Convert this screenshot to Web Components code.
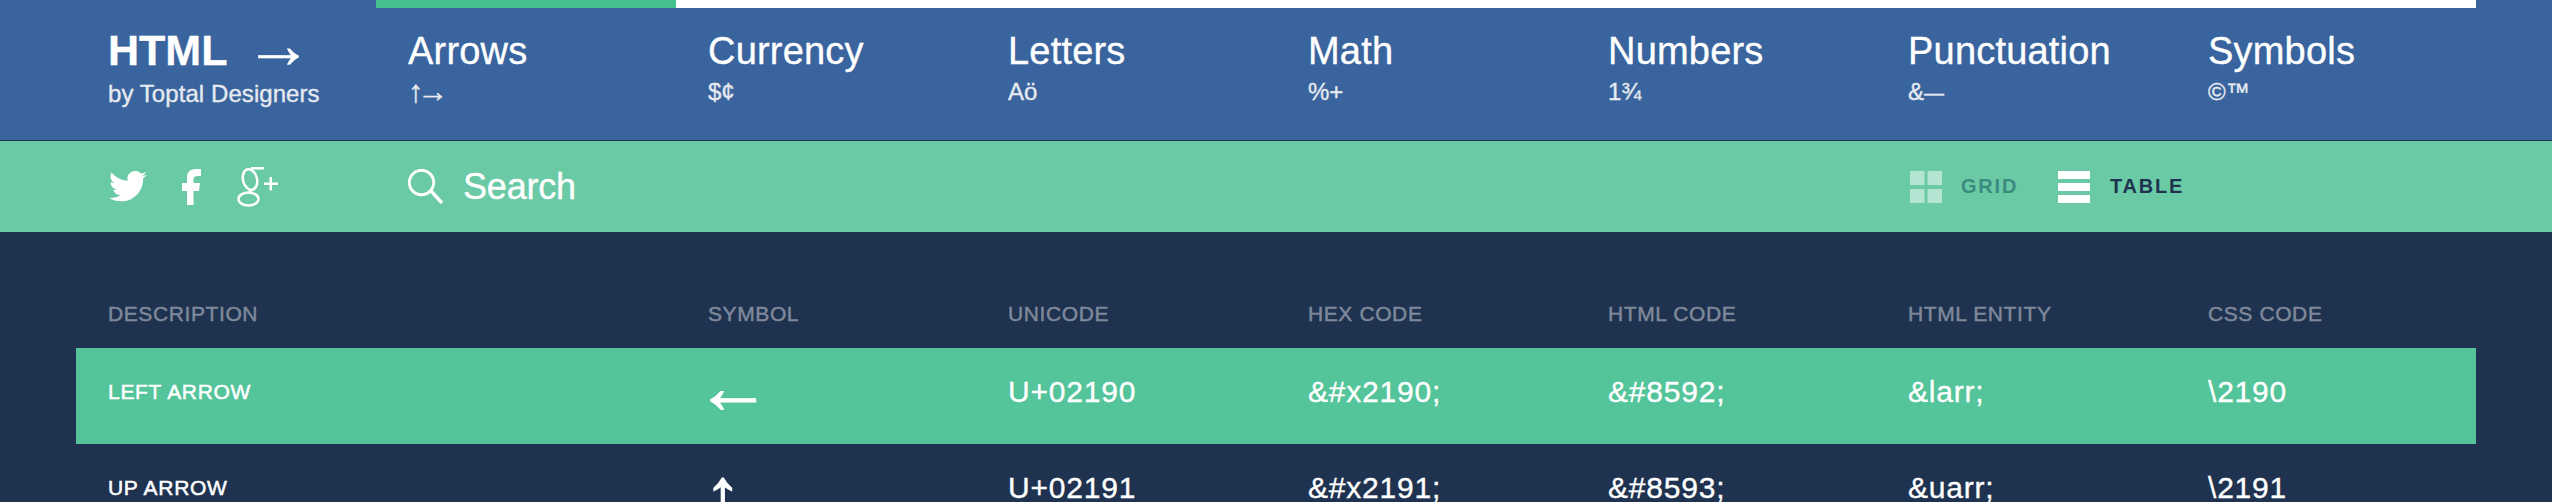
<!DOCTYPE html>
<html><head><meta charset="utf-8">
<style>
html,body{margin:0;padding:0;height:502px;overflow:hidden;background:#1f3350;font-family:"Liberation Sans",Arial,sans-serif;color:#fff}
</style></head>
<body>
<x-header>
  <x-brand slot="brand"></x-brand>
  <x-nav-item>Arrows<span slot="sub" style="font-size:31px;line-height:28px"><span style="letter-spacing:-6px">↑</span>→</span></x-nav-item>
  <x-nav-item>Currency<span slot="sub">$¢</span></x-nav-item>
  <x-nav-item>Letters<span slot="sub">Aö</span></x-nav-item>
  <x-nav-item>Math<span slot="sub">%+</span></x-nav-item>
  <x-nav-item>Numbers<span slot="sub">1¾</span></x-nav-item>
  <x-nav-item>Punctuation<span slot="sub">&amp;<span style="font-size:20px">—</span></span></x-nav-item>
  <x-nav-item>Symbols<span slot="sub">©™</span></x-nav-item>
</x-header>
<x-toolbar></x-toolbar>
<x-table>
  <x-row head><x-cell>Description</x-cell><x-cell>Symbol</x-cell><x-cell>Unicode</x-cell><x-cell>Hex Code</x-cell><x-cell>HTML Code</x-cell><x-cell>HTML Entity</x-cell><x-cell>CSS Code</x-cell></x-row>
  <x-row active><x-cell kind="name">Left Arrow</x-cell><x-cell kind="sym">←</x-cell><x-cell>U+02190</x-cell><x-cell>&amp;#x2190;</x-cell><x-cell>&amp;#8592;</x-cell><x-cell>&amp;larr;</x-cell><x-cell>\2190</x-cell></x-row>
  <x-row><x-cell kind="name">Up Arrow</x-cell><x-cell kind="sym-up">↑</x-cell><x-cell>U+02191</x-cell><x-cell>&amp;#x2191;</x-cell><x-cell>&amp;#8593;</x-cell><x-cell>&amp;uarr;</x-cell><x-cell>\2191</x-cell></x-row>
</x-table>
<script>
function def(name, css, html){
  customElements.define(name, class extends HTMLElement{
    constructor(){super();this.attachShadow({mode:'open'}).innerHTML='<style>'+css+'</style>'+html;}
  });
}
def('x-header',`
  :host{display:block;height:132px;padding-top:8px;background:#3a649e;border-bottom:1px solid #1f3350;position:relative;-webkit-text-stroke:.35px currentColor}
  .bar{position:absolute;top:0;left:376px;width:2100px;height:8px;background:linear-gradient(90deg,#45c08f 300px,#fff 300px)}
  .row{display:flex;padding-left:108px}
  .brand{width:300px;flex:none}
  .items{display:flex}
`,`<div class="bar"></div><div class="row"><div class="brand"><slot name="brand"></slot></div><div class="items"><slot></slot></div></div>`);
def('x-brand',`
  :host{display:block;padding-top:18px}
  .t{font-size:43px;font-weight:700;line-height:48px;display:flex;align-items:center;height:48px}
  .a{font-size:68px;font-weight:400;line-height:48px;margin-left:17px;margin-bottom:12px}
  .s{font-size:24px;line-height:28px;margin-top:6px;color:#e6eaf0;letter-spacing:.07px}
`,`<div class="t"><span>HTML</span><span class="a">→</span></div><div class="s">by Toptal Designers</div>`);
def('x-nav-item',`
  :host{display:block;width:300px;padding-top:21px}
  .t{font-size:38px;line-height:44px;letter-spacing:.2px}
  .s{font-size:24px;line-height:28px;margin-top:5px;color:#e6eaf0}
`,`<div class="t"><slot></slot></div><div class="s"><slot name="sub"></slot></div>`);
def('x-toolbar',`
  :host{display:flex;align-items:center;height:91px;background:#69caa5;padding-left:108px;box-sizing:border-box}
  .social{width:300px;flex:none;display:flex;align-items:center;height:40px}
  .social svg{display:block;fill:#fff}
  .tw{margin-left:1px}.fb{margin-left:34px}.gp{margin-left:36px}
  .search{flex:1;display:flex;align-items:center;gap:20px;font-size:36px;letter-spacing:-.2px;-webkit-text-stroke:.35px currentColor}
  .search svg{display:block}
  .view{position:absolute;left:1910px;display:flex;align-items:center;gap:19px;font-size:20px;font-weight:700;letter-spacing:1.800px}
  .view.table{left:2058px;color:#1f3350;gap:20px}
  .view.grid{color:#3c8a7e}
  .v{display:block}
`,`
<div class="social">
  <svg class="tw" width="38" height="32" viewBox="0 0 24 20.2" preserveAspectRatio="none"><path d="M23.95 2.37a10 10 0 0 1-2.83.78 4.96 4.96 0 0 0 2.17-2.73c-.95.56-2 .96-3.13 1.19A4.92 4.92 0 0 0 11.78 6.1C7.69 5.9 4.07 3.93 1.64.96a4.82 4.82 0 0 0-.67 2.48c0 1.7.87 3.21 2.19 4.09a4.9 4.9 0 0 1-2.23-.61v.06a4.92 4.92 0 0 0 3.95 4.82 5 5 0 0 1-2.21.09 4.94 4.94 0 0 0 4.6 3.42A9.87 9.87 0 0 1 1.17 17c-.39 0-.78-.02-1.17-.07A14 14 0 0 0 7.56 19.14c9.05 0 14-7.5 14-13.99 0-.21 0-.42-.02-.63a9.93 9.93 0 0 0 2.46-2.13z"/></svg>
  <svg class="fb" width="20" height="36" viewBox="0 0 20 36"><path d="M6 36V22H1v-8h5V8.500C6 3 9 0 15 0h5v7h-3c-3 0-4.500 1-4.500 3v4H19l-1 8h-5.500v14z"/></svg>
  <svg class="gp" width="42" height="40" viewBox="0 0 42 40"><g fill="none" stroke="#fff" stroke-width="2.500"><ellipse cx="13" cy="12.500" rx="7" ry="10.500" transform="rotate(-14 13 12.500)"/><ellipse cx="11.500" cy="32" rx="10" ry="6.500"/><path d="M14 1.200h13M15 23c-3 1-3 2 -1 3.500"/></g><path d="M32.500 10h2.500v5.500h6V18h-6v5.500h-2.500V18H27v-2.500h5.500z"/></svg>
</div>
<div class="search"><svg width="35" height="35" viewBox="0 0 35 35" fill="none" stroke="#fff"><circle cx="13.500" cy="13.500" r="12.200" stroke-width="2.900"/><path d="M23 22l11 12" stroke-width="3.500"/></svg><span>Search</span></div>
<div class="view grid"><svg class="v" width="32" height="32" viewBox="0 0 32 32" fill="#fff" fill-opacity=".5"><rect width="14.500" height="14"/><rect x="17.500" width="14.500" height="14"/><rect y="18" width="14.500" height="14"/><rect x="17.500" y="18" width="14.500" height="14"/></svg><span>GRID</span></div>
<div class="view table"><svg class="v" width="32" height="32" viewBox="0 0 32 32" fill="#fff"><rect width="32" height="8"/><rect y="12" width="32" height="8"/><rect y="24" width="32" height="8"/></svg><span>TABLE</span></div>
`);
def('x-table',`:host{display:block;padding:0 76px;height:270px;overflow:hidden}`,`<slot></slot>`);
def('x-row',`
  :host{display:grid;grid-template-columns:600px repeat(6,300px);height:96px;padding-left:32px;padding-top:28px;box-sizing:border-box;align-items:start;-webkit-text-stroke:.35px currentColor}
  :host([head]){height:116px;padding-top:70px;color:#7f899b;text-transform:uppercase;--cell-size:21px;--cell-ls:.6px;--cell-lh:24px;-webkit-text-stroke:.45px currentColor}
  :host([active]){background:#54c49a}
`,`<slot></slot>`);
def('x-cell',`
  :host{display:block;font-size:var(--cell-size,30px);line-height:var(--cell-lh,32px);letter-spacing:var(--cell-ls,.8px)}
  :host([kind=name]){font-size:21px;letter-spacing:.7px;text-transform:uppercase;-webkit-text-stroke:.5px currentColor}
  :host([kind=sym]){font-size:76px;letter-spacing:0;margin-top:-5px;margin-left:-13px;-webkit-text-stroke:.9px currentColor}
  :host([kind=sym-up]){font-size:76px;letter-spacing:0;margin-top:7px;margin-left:-4px;-webkit-text-stroke:.9px currentColor}
`,`<slot></slot>`);
</script>
</body></html>
